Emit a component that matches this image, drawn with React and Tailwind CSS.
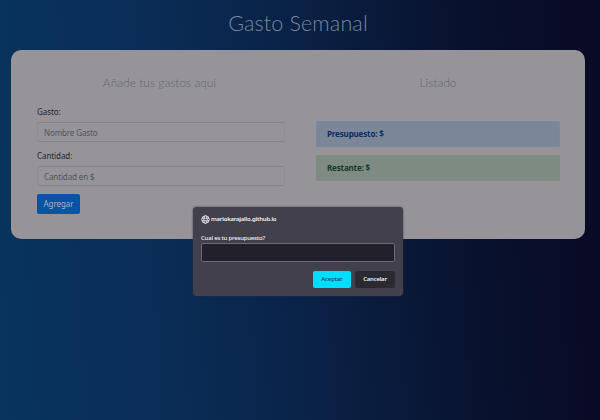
import React from "react";

function Field({ label, placeholder, className }) {
  return (
    <div className={className}>
      <label className="block h-[14px] text-[8px] leading-[14px] tracking-[-0.08px] text-[#25262c]">{label}</label>
      <input
        placeholder={placeholder}
        className="mt-[3px] block h-[20px] w-full rounded-[2px] border border-x-[#8f8e93] border-y-[#838488] bg-[#969499] px-[6px] text-[8px] tracking-[-0.12px] placeholder:text-[#50565b] outline-none"
      />
    </div>
  );
}

function Heading({ children, className }) {
  return (
    <h2 className={`h-[20px] whitespace-nowrap text-center font-['Lato'] text-[12px] font-light leading-[20px] text-[#62666e] ${className}`}>
      {children}
    </h2>
  );
}

function Dialog() {
  return (
    <div className="absolute left-[193px] top-[207px] flex h-[89px] w-[210px] flex-col rounded-[4px] bg-[#42404d] px-[8px] pt-[7px] text-[6px] text-[#f1f1f5] shadow-[0_0_2px_#32313a]">
      <div className="flex h-[10px] items-center gap-[2px]">
        <svg viewBox="0 0 16 16" className="h-[9px] w-[9px] shrink-0" fill="none" stroke="currentColor" strokeWidth="1.5">
          <circle cx="8" cy="8" r="6.7" />
          <ellipse cx="8" cy="8" rx="3" ry="6.7" />
          <path d="M1.7 5.8h12.6M1.7 10.2h12.6" />
        </svg>
        <span className="-ml-px font-semibold leading-[10px] tracking-[-0.22px]">mariokarajallo.github.io</span>
      </div>
      <p className="mt-[9px] h-[10px] font-medium leading-[10px] tracking-[-0.2px]">Cual es tu presupuesto?</p>
      <input className="block h-[19px] w-full rounded-[2px] border border-[#6b6a75] bg-[#22202b] outline-none" />
      <div className="mt-[9px] flex justify-end gap-[4px] tracking-[-0.1px]">
        <button className="h-[17px] w-[38px] rounded-[2px] bg-[#00ddff] font-medium text-[#20405a]">Aceptar</button>
        <button className="h-[17px] w-[40px] rounded-[2px] bg-[#2b2a33] font-semibold tracking-[-0.25px]">Cancelar</button>
      </div>
    </div>
  );
}

export default function App() {
  return (
    <main className="relative h-[420px] w-[600px] overflow-hidden bg-[linear-gradient(86deg,#08345d_0%,#0a2d56_28%,#0a2247_50%,#08132f_76%,#090a25_96%)] font-['Noto_Sans',sans-serif]">
      <h1 className="ml-[-4px] h-[50px] pt-[8px] text-center font-['Lato'] text-[21.5px] font-light leading-[30px] tracking-[0.15px] text-[#7887a0]">
        Gasto Semanal
      </h1>
      <section className="ml-[11px] flex h-[189px] w-[574px] gap-[31px] rounded-[10px] bg-[#969499] pl-[26px] pr-[25px] pt-[23px]">
        <div className="w-[248px]">
          <Heading className="-ml-[3px]">Añade tus gastos aquí</Heading>
          <Field label="Gasto:" placeholder="Nombre Gasto" className="mt-[12px]" />
          <Field label="Cantidad:" placeholder="Cantidad en $" className="mt-[7px]" />
          <button className="mt-[8px] block h-[20px] w-[43px] rounded-[2px] bg-[#0853a3] text-[8px] tracking-[-0.05px] text-[#a6b3c5]">
            Agregar
          </button>
        </div>
        <div className="w-[244px]">
          <Heading>Listado</Heading>
          <div className="mt-[28px] flex h-[26px] items-center rounded-[2px] border border-[#748aa5] bg-[#7b8798] pl-[10px] text-[8px] font-bold tracking-[-0.15px] text-[#082e60]">
            Presupuesto: $
          </div>
          <div className="mt-[8px] flex h-[26px] items-center rounded-[2px] border border-[#7b8c80] bg-[#7d8b82] pl-[10px] text-[8px] font-bold tracking-[-0.15px] text-[#173a25]">
            Restante: $
          </div>
        </div>
      </section>
      <Dialog />
    </main>
  );
}
